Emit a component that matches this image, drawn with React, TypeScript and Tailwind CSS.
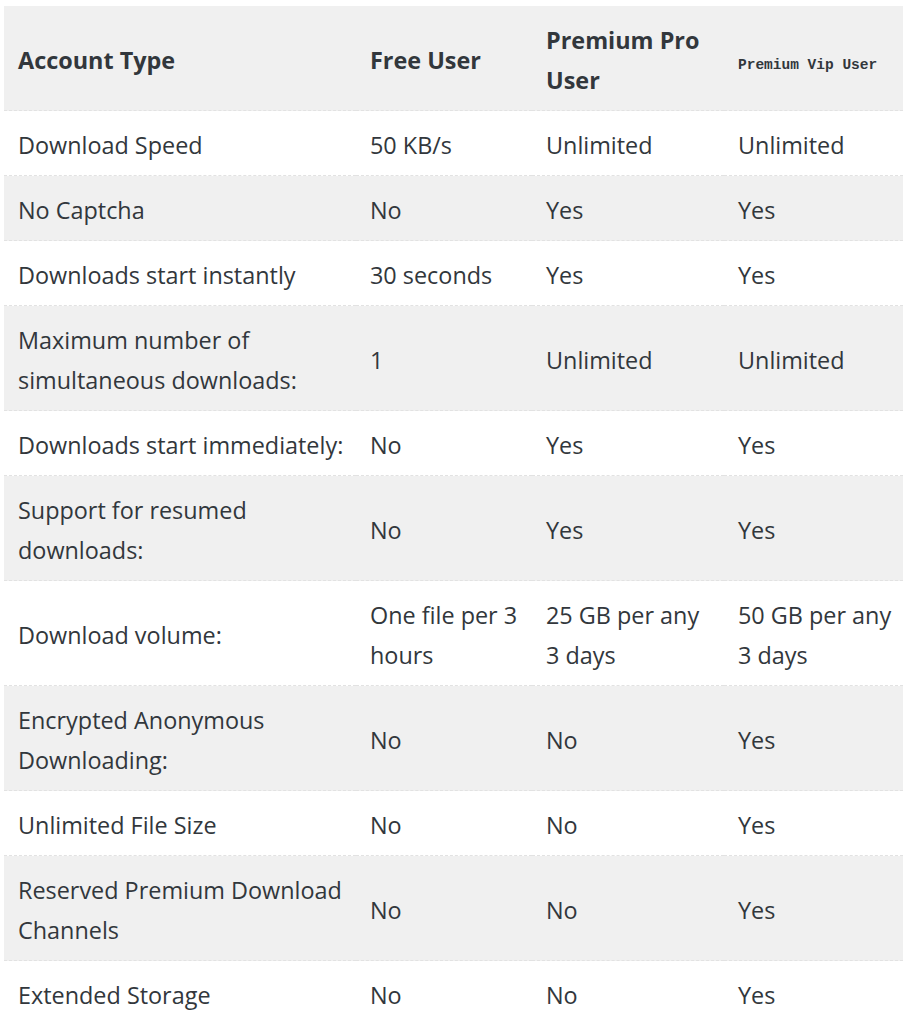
const ROWS: string[][] = [
  ['Download Speed', '50 KB/s', 'Unlimited', 'Unlimited'],
  ['No Captcha', 'No', 'Yes', 'Yes'],
  ['Downloads start instantly', '30 seconds', 'Yes', 'Yes'],
  ['Maximum number of simultaneous downloads:', '1', 'Unlimited', 'Unlimited'],
  ['Downloads start immediately:', 'No', 'Yes', 'Yes'],
  ['Support for resumed downloads:', 'No', 'Yes', 'Yes'],
  ['Download volume:', 'One file per 3 hours', '25 GB per any 3 days', '50 GB per any 3 days'],
  ['Encrypted Anonymous Downloading:', 'No', 'No', 'Yes'],
  ['Unlimited File Size', 'No', 'No', 'Yes'],
  ['Reserved Premium Download Channels', 'No', 'No', 'Yes'],
  ['Extended Storage', 'No', 'No', 'Yes'],
];

export default function App() {
  return (
    <div className="bg-white min-h-screen pt-[6px] pl-[4px] overflow-hidden">
      <table
        className="table-fixed border-collapse w-[899px] text-[#32373c] text-[23.4px] leading-[40px]"
        style={{ fontFamily: '"Open Sans", "Noto Sans", sans-serif' }}
      >
        <colgroup>
          <col className="w-[352px]" />
          <col className="w-[176px]" />
          <col className="w-[192px]" />
          <col className="w-[179px]" />
        </colgroup>
        <thead>
          <tr className="bg-[#f0f0f0] border-b border-dashed border-[#e2e2e2]">
            <th className="text-left font-bold pl-[14px] pr-[6px] pt-[14px] pb-[10px] align-middle">Account Type</th>
            <th className="text-left font-bold pl-[14px] pr-[6px] pt-[14px] pb-[10px] align-middle">Free User</th>
            <th className="text-left font-bold pl-[14px] pr-[6px] pt-[14px] pb-[10px] align-middle">Premium Pro User</th>
            <th
              className="text-left font-bold pl-[14px] pr-[6px] pt-[19px] pb-[5px] align-middle text-[14.5px] leading-[20px]"
              style={{ fontFamily: '"Liberation Mono", "DejaVu Sans Mono", monospace' }}
            >
              Premium Vip User
            </th>
          </tr>
        </thead>
        <tbody>
          {ROWS.map((r, i) => (
            <tr
              key={i}
              className={`border-b border-dashed border-[#e2e2e2] ${i % 2 === 1 ? 'bg-[#f0f0f0]' : 'bg-white'}`}
            >
              {r.map((c, j) => (
                <td key={j} className="pl-[14px] pr-[6px] pt-[14px] pb-[10px] align-middle">
                  {c}
                </td>
              ))}
            </tr>
          ))}
        </tbody>
      </table>
    </div>
  );
}
